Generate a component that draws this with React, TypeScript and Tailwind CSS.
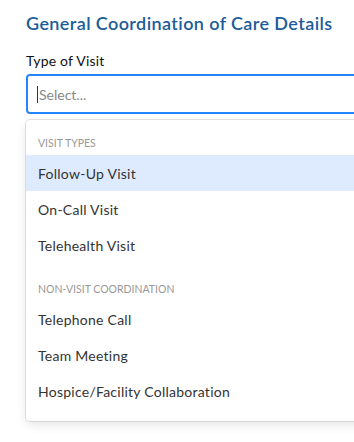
import React from "react"

type Group = { label: string; options: string[] }

const groups: Group[] = [
  { label: "Visit Types", options: ["Follow-Up Visit", "On-Call Visit", "Telehealth Visit"] },
  {
    label: "Non-Visit Coordination",
    options: ["Telephone Call", "Team Meeting", "Hospice/Facility Collaboration"],
  },
]

export default function App() {
  const focused = "Follow-Up Visit"

  return (
    <div className="w-[354px] h-[442px] overflow-hidden bg-white font-['Lato','Liberation_Sans',sans-serif]">
      <div className="w-[460px] pl-[26px] pt-[11px]">
        <h2 className="text-[18px] leading-[24px] font-semibold tracking-[0.4px] text-[#1c5c98]">
          General Coordination of Care Details
        </h2>

        <label className="block mt-[16px] text-[14px] leading-[20px] font-normal tracking-[0.2px] text-[#111]">
          Type of Visit
        </label>

        {/* Select control */}
        <div className="mt-[3px] h-[40px] rounded-[4px] border-2 border-[#2684ff] flex items-center pl-[9px]">
          <span className="w-px h-[17px] bg-[#333]" />
          <span className="text-[14px] text-[#888] ml-[1px]">Select...</span>
        </div>

        {/* Menu */}
        <div className="mt-[6px] rounded-[4px] bg-white shadow-[0_0_0_1px_rgba(0,0,0,0.1),0_4px_11px_rgba(0,0,0,0.1)] pt-[5px] pb-[4px]">
          {groups.map((g) => (
            <div key={g.label} className="py-[8px]">
              <div className="h-[22px] px-[12px] flex items-center text-[10.5px] uppercase text-[#999]">
                {g.label}
              </div>
              {g.options.map((o) => (
                <div
                  key={o}
                  className={`h-[36px] px-[12px] flex items-center text-[14px] tracking-[0.25px] text-[#333] ${
                    o === focused ? "bg-[#deebff]" : ""
                  }`}
                >
                  {o}
                </div>
              ))}
            </div>
          ))}
        </div>
      </div>
    </div>
  )
}
